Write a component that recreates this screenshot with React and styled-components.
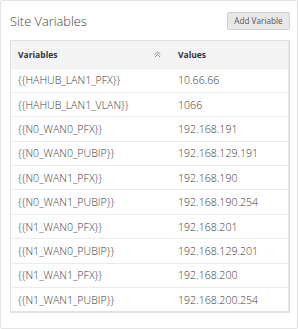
import styled, { createGlobalStyle } from 'styled-components';

const GlobalStyle = createGlobalStyle`
    body {
        margin: 0;
        background: #fff;
        font-family: "Open Sans", "Liberation Sans", sans-serif;
        color: #555;
    }
`;

const Panel = styled.div`
    box-sizing: border-box;
    width: 298px;
    height: 329px;
    border: 1px solid #e4e4e4;
    border-radius: 2px;
    padding: 0 7px 0 9px;
`;

const PanelHeader = styled.div`
    display: flex;
    align-items: center;
    justify-content: space-between;
    height: 39px;
`;

const Title = styled.h2`
    margin: 0;
    font-size: 12.8px;
    font-weight: 300;
    color: #444;
`;

const Button = styled.button`
    box-sizing: border-box;
    height: 18px;
    width: 63px;
    padding: 0;
    font-family: inherit;
    font-size: 8.2px;
    color: #555;
    background: #e8e8e8;
    border: 1px solid #cfcfcf;
    border-radius: 2px;
`;

const Table = styled.div`
    border: 1px solid #e2e2e2;
    border-right-width: 2px;
    border-bottom-width: 2px;
`;

const Row = styled.div`
    display: grid;
    grid-template-columns: 160px 1fr;
    align-items: center;
    box-sizing: border-box;
    height: ${p => (p.head ? '26.5px' : '24.4px')};
    background: ${p => (p.head ? '#f4f4f4' : '#fff')};
    border-top: ${p => (p.head ? 'none' : '1px solid #ebebeb')};
`;

const Cell = styled.div`
    display: flex;
    align-items: center;
    justify-content: space-between;
    padding: 0 7px;
    font-size: ${p => (p.head ? '8.5px' : '10.6px')};
    font-weight: ${p => (p.head ? 700 : 300)};
    color: ${p => (p.head ? '#333' : '#3a3a3a')};
    white-space: nowrap;
`;

const SortIcon = () => (
    <svg width="7" height="7" viewBox="0 0 8 8" style={{ marginRight: 3 }}>
        <path d="M1 4 L4 1 L7 4 M1 7 L4 4 L7 7" fill="none" stroke="#777" strokeWidth="1" />
    </svg>
);

const rows = [
    ['{{HAHUB_LAN1_PFX}}', '10.66.66'],
    ['{{HAHUB_LAN1_VLAN}}', '1066'],
    ['{{N0_WAN0_PFX}}', '192.168.191'],
    ['{{N0_WAN0_PUBIP}}', '192.168.129.191'],
    ['{{N0_WAN1_PFX}}', '192.168.190'],
    ['{{N0_WAN1_PUBIP}}', '192.168.190.254'],
    ['{{N1_WAN0_PFX}}', '192.168.201'],
    ['{{N1_WAN0_PUBIP}}', '192.168.129.201'],
    ['{{N1_WAN1_PFX}}', '192.168.200'],
    ['{{N1_WAN1_PUBIP}}', '192.168.200.254'],
];

const App = () => {
    return (
        <>
            <GlobalStyle />
            <Panel>
                <PanelHeader>
                    <Title>Site Variables</Title>
                    <Button>Add Variable</Button>
                </PanelHeader>
                <Table>
                    <Row head>
                        <Cell head>Variables <SortIcon /></Cell>
                        <Cell head>Values</Cell>
                    </Row>
                    {rows.map(([name, value]) => (
                        <Row key={name}>
                            <Cell>{name}</Cell>
                            <Cell>{value}</Cell>
                        </Row>
                    ))}
                </Table>
            </Panel>
        </>
    );
};

export default App;
